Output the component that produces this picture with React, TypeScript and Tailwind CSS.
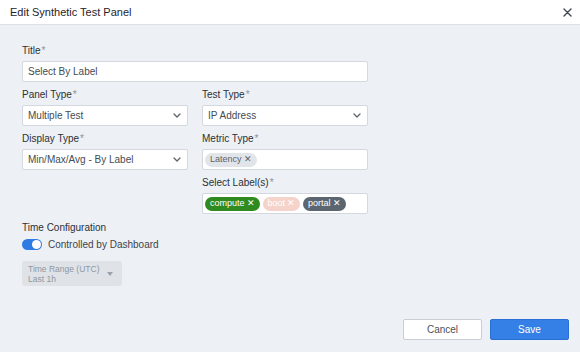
import React from 'react';

const font = { fontFamily: '"Liberation Sans", Arial, sans-serif' };

// Small label with a grey asterisk
function Label({ text }: { text: string }) {
  return (
    <div className="h-[14px] mb-[3px] text-[10px] leading-[14px] text-[#2b3137] font-medium">
      {text}
      <span className="text-[#8a939c] ml-[1px]">*</span>
    </div>
  );
}

function Chevron() {
  return (
    <svg width="8" height="5" viewBox="0 0 8 5" className="text-[#5a636c]">
      <path d="M1 1l3 3 3-3" fill="none" stroke="currentColor" strokeWidth="1.3" strokeLinecap="round" strokeLinejoin="round" />
    </svg>
  );
}

function Select({ value }: { value: string }) {
  return (
    <div className="h-[21px] bg-white border border-[#d3d8de] rounded-[2px] flex items-center justify-between pl-[5px] pr-[6px] text-[10px] text-[#454c53]">
      <span>{value}</span>
      <Chevron />
    </div>
  );
}

function Chip({ text, className }: { text: string; className: string }) {
  return (
    <span className={`h-[14px] rounded-full px-[5px] flex items-center gap-[2px] text-[9px] leading-none ${className}`}>
      {text}
      <span className="text-[9px]">✕</span>
    </span>
  );
}

export default function App() {
  return (
    <div style={font} className="w-[580px] h-[352px] bg-[#edf0f4] flex flex-col overflow-hidden">
      {/* header */}
      <div className="h-[25px] shrink-0 bg-white border-b border-[#dde1e6] flex items-center justify-between pl-[10px] pr-[8px]">
        <span className="text-[11px] text-[#1f2428]">Edit Synthetic Test Panel</span>
        <svg width="9" height="9" viewBox="0 0 9 9">
          <path d="M1 1l7 7M8 1l-7 7" stroke="#3f4852" strokeWidth="1.4" strokeLinecap="round" />
        </svg>
      </div>

      {/* form */}
      <div className="flex-1 pl-[22px] pt-[19px]">
        <div className="w-[346px] grid grid-cols-2 gap-x-[14px] gap-y-[6px]">
          <div className="col-span-2">
            <Label text="Title" />
            <div className="h-[21px] bg-white border border-[#d3d8de] rounded-[2px] flex items-center pl-[5px] text-[10px] text-[#454c53]">
              Select By Label
            </div>
          </div>
          <div>
            <Label text="Panel Type" />
            <Select value="Multiple Test" />
          </div>
          <div>
            <Label text="Test Type" />
            <Select value="IP Address" />
          </div>
          <div>
            <Label text="Display Type" />
            <Select value="Min/Max/Avg - By Label" />
          </div>
          <div>
            <Label text="Metric Type" />
            <div className="h-[21px] bg-white border border-[#d3d8de] rounded-[2px] flex items-center pl-[2px]">
              <Chip text="Latency" className="bg-[#e1e5ea] text-[#5b636b]" />
            </div>
          </div>
          <div />
          <div>
            <Label text="Select Label(s)" />
            <div className="h-[21px] bg-white border border-[#d3d8de] rounded-[2px] flex items-center gap-[3px] pl-[2px]">
              <Chip text="compute" className="bg-[#2f8a1f] text-white" />
              <Chip text="boot" className="bg-[#f6d3ca] text-white" />
              <Chip text="portal" className="bg-[#5b6670] text-white" />
            </div>
          </div>
        </div>

        {/* time configuration */}
        <div className="mt-[7px] text-[10px] leading-[14px] text-[#2b3137] font-medium">Time Configuration</div>
        <div className="mt-[2px] flex items-center gap-[6px]">
          <div className="w-[20px] h-[11px] rounded-full bg-[#2f7be4] flex items-center justify-end pr-[1px]">
            <div className="w-[9px] h-[9px] rounded-full bg-white" />
          </div>
          <span className="text-[10px] text-[#3d444b]">Controlled by Dashboard</span>
        </div>
        <div className="mt-[9px] w-[100px] h-[25px] rounded-[3px] bg-[#dfe3e8] flex items-center justify-between pl-[6px] pr-[9px]">
          <div className="text-[8.5px] leading-[10px] text-[#8e979f]">
            <div>Time Range (UTC)</div>
            <div>Last 1h</div>
          </div>
          <svg width="6" height="4" viewBox="0 0 6 4">
            <path d="M0 0h6L3 4z" fill="#9aa2aa" />
          </svg>
        </div>
      </div>

      {/* footer */}
      <div className="flex justify-end gap-[8px] pr-[11px] pb-[12px]">
        <button className="w-[79px] h-[21px] rounded-[2px] bg-white border border-[#c9ced5] text-[10px] text-[#4a5159]">
          Cancel
        </button>
        <button className="w-[79px] h-[21px] rounded-[2px] bg-[#3580e6] border border-[#2a6fd3] text-[10px] text-white">
          Save
        </button>
      </div>
    </div>
  );
}
